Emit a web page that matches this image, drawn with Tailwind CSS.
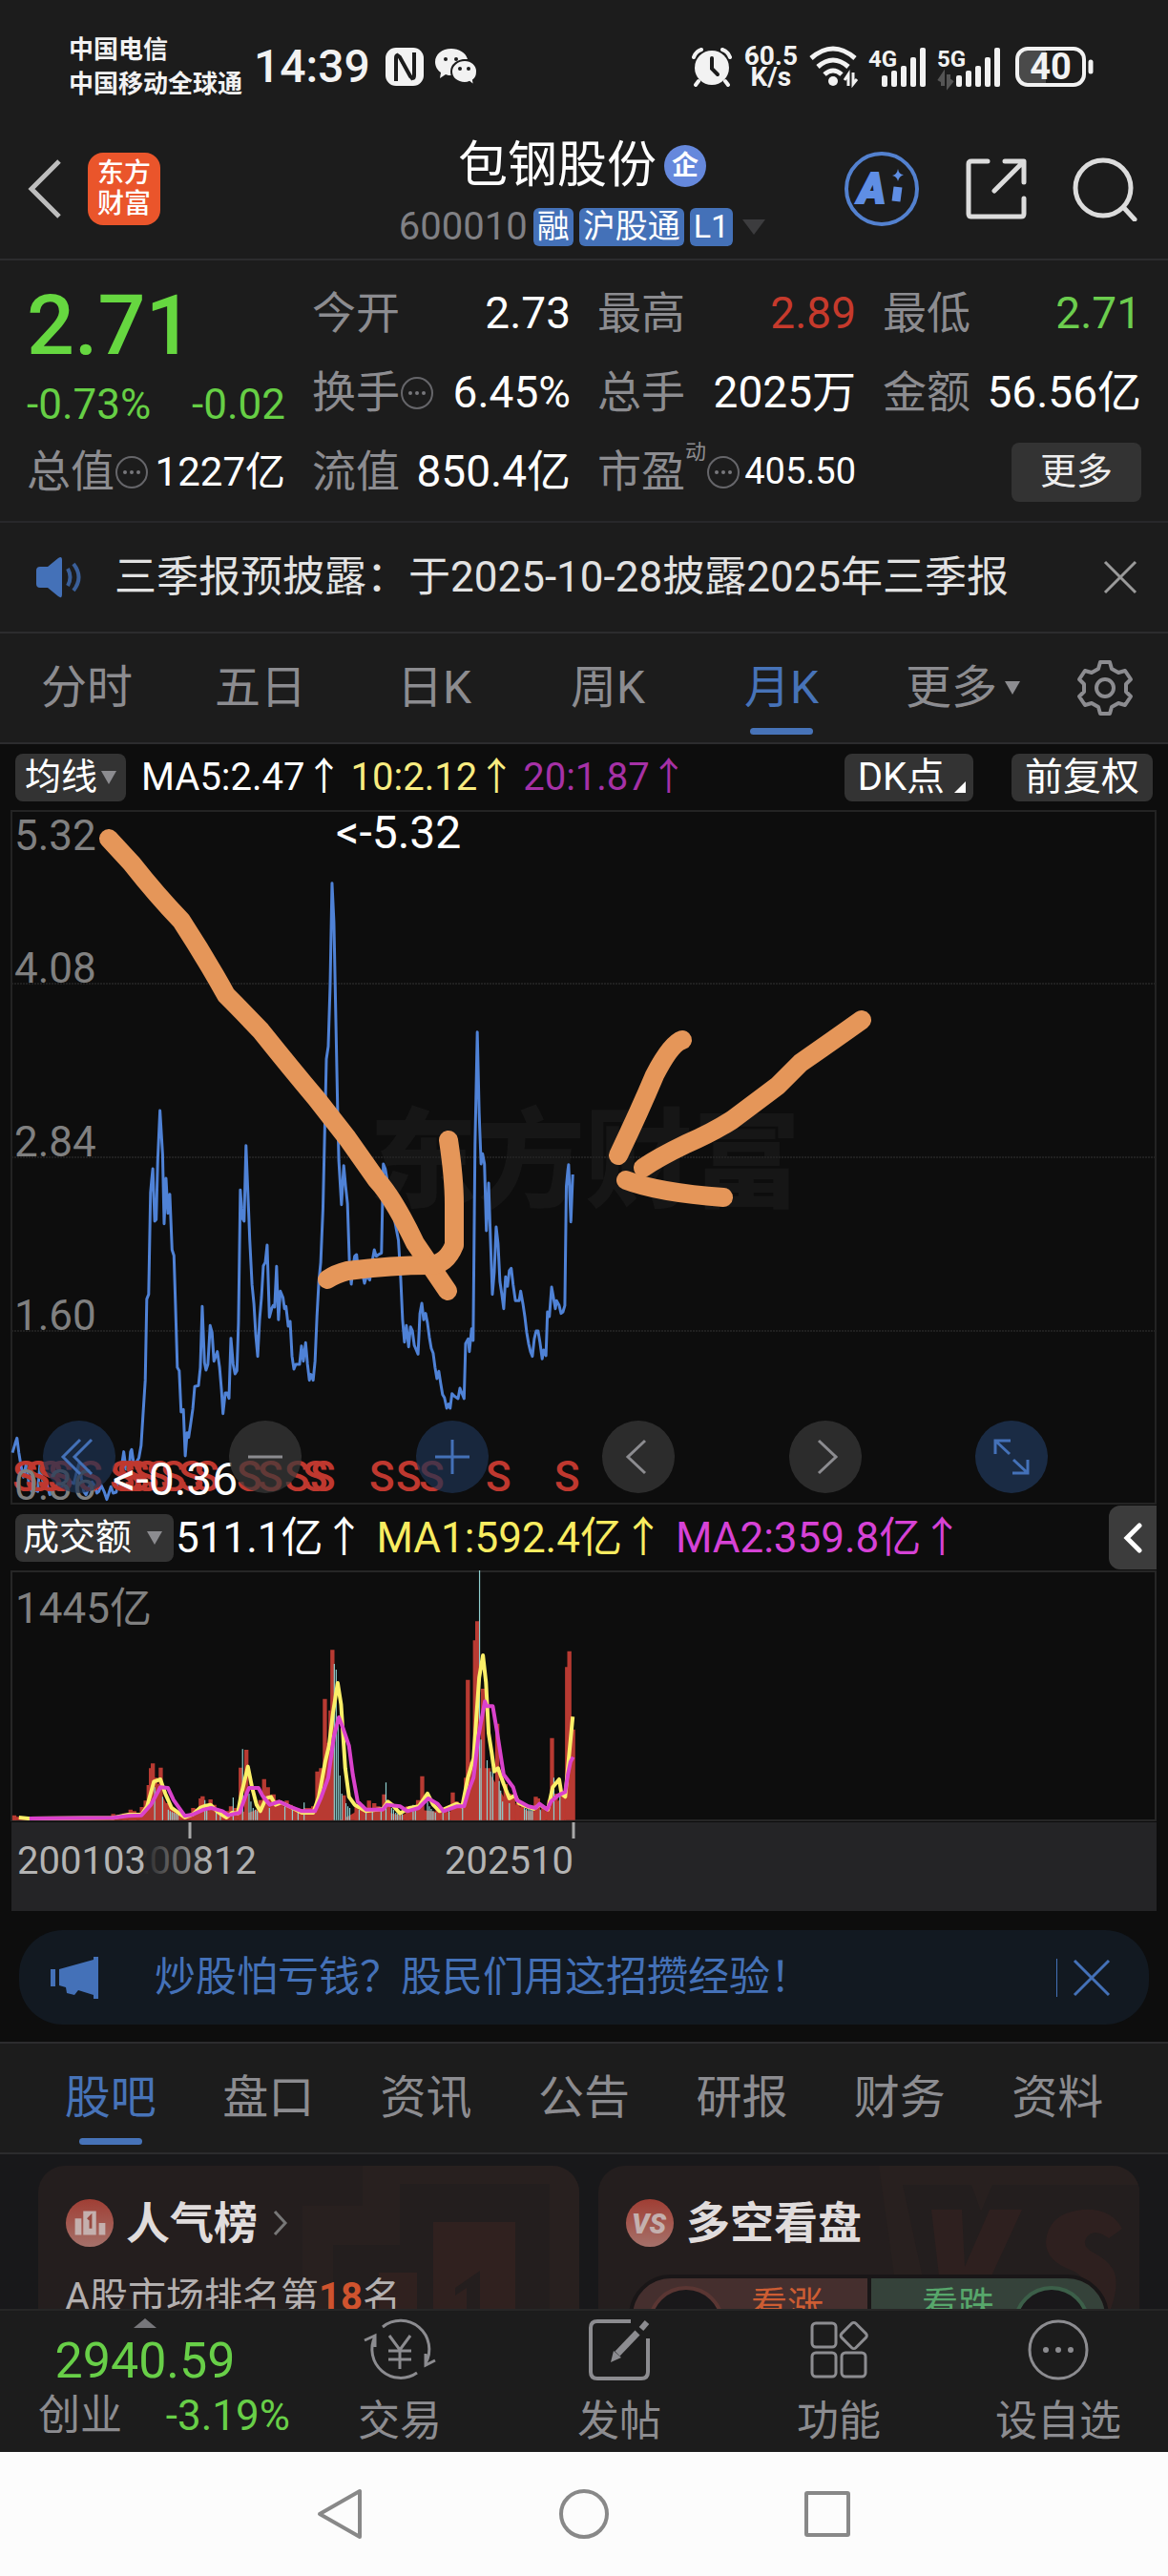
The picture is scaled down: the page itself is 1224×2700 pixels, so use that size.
<!DOCTYPE html>
<html lang="zh-CN">
	<head>
		<meta charset="UTF-8" />
		<meta name="viewport" content="width=device-width, initial-scale=1.0" />
		<title>包钢股份 600010</title>
		<script src="https://cdn.jsdelivr.net/npm/@tailwindcss/browser@4"></script>
		<style>
			body {
				font-family: Roboto, "Noto Sans CJK SC", sans-serif;
			}
		</style>
	</head>
	<body class="bg-[#0d0d0d] text-white">
		<!-- Status bar -->
		<div class="flex h-31 items-center bg-[#1c1c1c] pt-4 pr-19 pl-18 font-medium text-[#f2f2f2]">
			<div class="text-[26px] leading-9 font-bold">
				<div>中国电信</div>
				<div>中国移动全球通</div>
			</div>
			<div class="ml-3 text-5xl">14:39</div>
			<svg class="ml-3.5 h-11 w-11" viewBox="0 0 44 44" fill="none">
				<rect x="2" y="2" width="40" height="40" rx="11" fill="#f2f2f2" />
				<path d="M13 37V13q0-5 4-1l11 20q4 4 4-1V7" stroke="#1c1c1c" stroke-width="4" />
				<path d="M14 8l16 28" stroke="#1c1c1c" stroke-width="2" />
			</svg>
			<svg class="ml-2 h-11 w-12" viewBox="0 0 48 44" fill="#f2f2f2">
				<path d="M19 3C9 3 2 9 2 17c0 5 3 9 6 11l-1 6 6-4c2 1 4 1 7 1-2-10 5-17 16-17C34 7 27 3 19 3z" />
				<path d="M46 27c0-7-6-12-13-12s-14 5-14 12 6 12 14 12c2 0 3 0 5-1l5 4-1-6c3-2 4-5 4-9z" stroke="#1c1c1c" stroke-width="2" />
				<g fill="#1c1c1c">
					<circle cx="13" cy="14" r="2" /><circle cx="24" cy="14" r="2" />
					<circle cx="28" cy="24" r="2" /><circle cx="37" cy="24" r="2" />
				</g>
			</svg>
			<svg class="ml-auto h-11 w-11" viewBox="0 0 44 44" fill="none" stroke="#f2f2f2" stroke-width="4" stroke-linecap="round">
				<circle cx="22" cy="23" r="18" fill="#f2f2f2" stroke="none" />
				<path d="M3 12q2-6 8-8M41 12q-2-6-8-8M8 37l-3 4M36 37l3 4" />
				<path d="M22 13v11l6 6" stroke="#1c1c1c" />
			</svg>
			<div class="ml-3 text-center text-[28px] leading-[22px] font-bold">
				<div>60.5</div>
				<div>K/s</div>
			</div>
			<svg class="ml-3 h-11 w-13" viewBox="0 0 52 44" fill="none" stroke="#f2f2f2" stroke-width="5">
				<path d="M2 13Q25-7 48 13M9 22Q25 8 41 22M16 30Q25 22 34 30" />
				<circle cx="25" cy="37" r="5" fill="#f2f2f2" stroke="none" />
				<path d="M41 42V30l-4 6M46 28v12l4-5" stroke-width="3" />
			</svg>
			<svg class="ml-2 h-11 w-17 overflow-visible" viewBox="0 0 68 44" fill="#f2f2f2">
				<text x="2" y="22" font-size="24" font-weight="700">4G</text>
				<g><rect x="16" y="31" width="6" height="12" rx="2" /><rect x="26" y="26" width="6" height="17" rx="2" /><rect x="36" y="21" width="6" height="22" rx="2" /><rect x="46" y="12" width="6" height="31" rx="2" /><rect x="56" y="2" width="6" height="41" rx="2" /></g>
			</svg>
			<svg class="ml-1 h-11 w-18 overflow-visible" viewBox="0 0 72 44" fill="#f2f2f2">
				<text x="2" y="22" font-size="24" font-weight="700">5G</text>
				<g><rect x="22" y="31" width="6" height="12" rx="2" /><rect x="32" y="26" width="6" height="17" rx="2" /><rect x="42" y="21" width="6" height="22" rx="2" /><rect x="52" y="12" width="6" height="31" rx="2" /><rect x="62" y="2" width="6" height="41" rx="2" /></g>
				<path d="M8 42V31l-4 6M14 30v11l4-5" fill="none" stroke="#555" stroke-width="4" />
			</svg>
			<svg class="ml-3 h-11 w-21" viewBox="0 0 84 44" fill="none">
				<path d="M14 3h18v38H14Q3 41 3 30V14Q3 3 14 3z" fill="#4a4a4a" />
				<rect x="2" y="3" width="70" height="38" rx="11" stroke="#f2f2f2" stroke-width="4" />
				<path d="M79 17v10" stroke="#f2f2f2" stroke-width="5" stroke-linecap="round" />
				<text x="37" y="35" fill="#f2f2f2" font-size="38" font-weight="700" text-anchor="middle">40</text>
			</svg>
		</div>

		<!-- Title bar -->
		<header class="grid h-[149px] grid-cols-[1fr_auto_1fr] items-center border-b-2 border-[#2c2c2e] bg-[#1c1c1c] pr-8 pl-7">
			<div class="flex items-center gap-7">
				<button aria-label="返回">
					<svg class="h-16 w-9" viewBox="0 0 36 64" fill="none" stroke="#bdbdbd" stroke-width="5"><path d="M34 3L5 32l29 29" /></svg>
				</button>
				<a href="#" class="flex h-19 w-19 items-center justify-center rounded-2xl bg-[#ea552b] text-center text-[28px] leading-8 font-medium text-white">东方<br />财富</a>
			</div>
			<div class="pt-4">
				<h1 class="flex h-16 items-center justify-center gap-2 text-[52px]">
					包钢股份
					<span class="flex h-11 w-11 items-center justify-center rounded-full bg-[#6588dc] text-[28px] font-bold">企</span>
				</h1>
				<div class="flex h-16 items-center justify-center gap-1.5 text-[34px]">
					<span class="text-[40px] text-[#808084]">600010</span>
					<span class="flex h-10 items-center rounded-md bg-[#4471b8] px-1">融</span>
					<span class="flex h-10 items-center rounded-md bg-[#4471b8] px-1">沪股通</span>
					<span class="flex h-10 items-center rounded-md bg-[#4471b8] px-1">L1</span>
					<svg class="ml-1 h-4 w-6" viewBox="0 0 24 16" fill="#3c3c3e"><path d="M0 0h24L12 16z" /></svg>
				</div>
			</div>
			<div class="flex items-center justify-end gap-12">
				<button aria-label="AI">
					<svg class="h-20 w-20" viewBox="0 0 80 80" fill="none">
						<circle cx="40" cy="40" r="37" stroke="#5381cf" stroke-width="4" />
						<text x="15" y="55" fill="#5f8ee4" stroke="#5f8ee4" stroke-width="2" font-size="44" font-weight="900" font-style="italic">A</text>
						<path d="M57 38l-2 15" stroke="#5f8ee4" stroke-width="9" stroke-linejoin="round" />
						<path d="M57 19q1 6 6 6-5 2-6 7-1-5-6-6 5-1 6-7z" fill="#5f8ee4" />
					</svg>
				</button>
				<button aria-label="分享">
					<svg class="h-16 w-16" viewBox="0 0 64 64" fill="none" stroke="#dcdcdc" stroke-width="5" stroke-linecap="round" stroke-linejoin="round">
						<path d="M23 3H6Q3 3 3 6v52q0 3 3 3h52q3 0 3-3V42M41 3h20v22M60 4L30 34" />
					</svg>
				</button>
				<button aria-label="搜索">
					<svg class="h-17 w-17" viewBox="0 0 68 68" fill="none" stroke="#dcdcdc" stroke-width="5" stroke-linecap="round">
						<circle cx="32" cy="33" r="29" /><path d="M54 54l11 12" />
					</svg>
				</button>
			</div>
		</header>

		<!-- Quote -->
		<section class="grid grid-cols-4 grid-rows-3 gap-x-7 border-b-2 border-[#28282a] bg-[#1c1c1c] px-7 pt-3.5 pb-2.5 text-[46px] *:h-[83px]">
			<div class="flex items-center pt-6 text-[88px] font-medium text-[#66d740]">2.71</div>
			<div class="flex items-center justify-between"><span class="text-[#8c8c90]">今开</span><span>2.73</span></div>
			<div class="flex items-center justify-between"><span class="text-[#8c8c90]">最高</span><span class="text-[#c63a2c]">2.89</span></div>
			<div class="flex items-center justify-between"><span class="text-[#8c8c90]">最低</span><span class="text-[#6ccd4e]">2.71</span></div>

			<div class="flex items-center justify-between pt-6 text-[44px] text-[#66cf45]"><span>-0.73%</span><span>-0.02</span></div>
			<div class="flex items-center">
				<span class="text-[#8c8c90]">换手</span>
				<svg class="h-9 w-9" viewBox="0 0 36 36" fill="#77777b"><circle cx="18" cy="18" r="16" fill="none" stroke="#66666a" stroke-width="2" /><circle cx="11" cy="18" r="2" /><circle cx="18" cy="18" r="2" /><circle cx="25" cy="18" r="2" /></svg>
				<span class="ml-auto">6.45%</span>
			</div>
			<div class="flex items-center justify-between"><span class="text-[#8c8c90]">总手</span><span>2025万</span></div>
			<div class="flex items-center justify-between whitespace-nowrap"><span class="text-[#8c8c90]">金额</span><span>56.56亿</span></div>

			<div class="flex items-center">
				<span class="text-[#8c8c90]">总值</span>
				<svg class="h-9 w-9" viewBox="0 0 36 36" fill="#77777b"><circle cx="18" cy="18" r="16" fill="none" stroke="#66666a" stroke-width="2" /><circle cx="11" cy="18" r="2" /><circle cx="18" cy="18" r="2" /><circle cx="25" cy="18" r="2" /></svg>
				<span class="ml-auto text-[42px]">1227亿</span>
			</div>
			<div class="flex items-center justify-between"><span class="text-[#8c8c90]">流值</span><span>850.4亿</span></div>
			<div class="flex items-center">
				<span class="text-[#8c8c90]">市盈</span>
				<span class="self-start pt-1 text-[22px] text-[#8c8c90]">动</span>
				<svg class="h-9 w-9" viewBox="0 0 36 36" fill="#77777b"><circle cx="18" cy="18" r="16" fill="none" stroke="#66666a" stroke-width="2" /><circle cx="11" cy="18" r="2" /><circle cx="18" cy="18" r="2" /><circle cx="25" cy="18" r="2" /></svg>
				<span class="ml-auto text-[38px]">405.50</span>
			</div>
			<div class="flex items-center justify-end"><button class="h-[62px] rounded-lg bg-[#333] px-[30px] text-[38px] text-[#ededed]">更多</button></div>
		</section>

		<!-- Notice -->
		<div class="flex h-[116px] items-center border-b-2 border-[#2c2c2e] bg-[#1c1c1c] pr-8 pl-9">
			<svg class="h-11 w-13" viewBox="0 0 52 44" fill="#4471b8">
				<path d="M6 11h8L25 2q4-3 4 2v36q0 5-4 2L14 33H6q-4 0-4-4V15q0-4 4-4z" />
				<path d="M35 13q5 9 0 18M41 8q11 14 0 28" fill="none" stroke="#3a5f99" stroke-width="4" />
			</svg>
			<p class="ml-8 text-[44px] whitespace-nowrap text-[#e2e2e2]">三季报预披露：于2025-10-28披露2025年三季报</p>
			<button class="ml-auto" aria-label="关闭">
				<svg class="h-9 w-9" viewBox="0 0 36 36" stroke="#9a9a9a" stroke-width="3"><path d="M2 2l32 32M34 2L2 34" /></svg>
			</button>
		</div>

		<!-- Period tabs -->
		<div class="flex h-[116px] items-center border-b-2 border-[#2c2c2e] bg-[#1c1c1c] text-5xl text-[#8c8c90]">
			<nav class="grid h-full flex-1 grid-cols-6 *:flex *:h-full *:items-center *:justify-center">
				<a href="#">分时</a>
				<a href="#">五日</a>
				<a href="#">日K</a>
				<a href="#">周K</a>
				<a href="#" class="relative text-[#4773b8]">月K<span class="absolute bottom-2 h-[7px] w-[66px] rounded-sm bg-[#4773b8]"></span></a>
				<a href="#" class="pl-4">更多<svg class="ml-2 h-4 w-4" viewBox="0 0 16 16" fill="#8c8c90"><path d="M0 1h16L8 15z" /></svg></a>
			</nav>
			<button class="flex w-[132px] justify-center" aria-label="设置">
				<svg class="h-15 w-15" viewBox="0 0 60 60" fill="none" stroke="#8c8c90" stroke-width="4" stroke-linejoin="round">
					<path d="M25 3h10l2 7 7 4 7-2 6 9-5 5v8l5 5-6 9-7-2-7 4-2 7H25l-2-7-7-4-7 2-6-9 5-5v-8l-5-5 6-9 7 2 7-4z" />
					<circle cx="30" cy="30" r="9" />
				</svg>
			</button>
		</div>

		<!-- Moving averages -->
		<div class="flex h-[69px] items-center gap-2 px-4 text-[40px] whitespace-nowrap">
			<button class="mr-2 flex h-[50px] items-center gap-1 rounded-lg bg-[#333] px-2.5 text-[38px]">
				均线<svg class="h-4 w-4" viewBox="0 0 16 16" fill="#8c8c90"><path d="M0 1h16L8 15z" /></svg>
			</button>
			<span>MA5:2.47↑</span>
			<span class="text-[#f8ec80]">10:2.12↑</span>
			<span class="text-[#a631a6]">20:1.87↑</span>
			<button class="mr-8 ml-auto flex h-[50px] items-center gap-2.5 rounded-lg bg-[#333] pr-2 pl-3.5">
				DK点<svg class="mt-5 h-3 w-3" viewBox="0 0 12 12" fill="#fff"><path d="M12 0v12H0z" /></svg>
			</button>
			<button class="flex h-[50px] items-center rounded-lg bg-[#333] px-3.5">前复权</button>
		</div>

		<!-- Monthly price chart -->
		<div class="relative">
			<svg class="block h-auto w-full" viewBox="0 849 1224 728" fill="none">
				<text x="387" y="1256" fill="#161616" font-size="113" font-weight="900">东方财富</text>
				<rect x="12" y="850" width="1199" height="726" stroke="#232323" stroke-width="2" />
				<path d="M12 1031h1199M12 1213h1199M12 1395h1199" stroke="#202020" stroke-width="2" stroke-dasharray="2 1" />
				<g transform="translate(0 1200) scale(.3954 .3333)">
					<polyline stroke="#4f82d6" stroke-width="3" vector-effect="non-scaling-stroke" stroke-linejoin="round" points="33,968 40,940 45,922 50,968 55,1005 62,1045 70,1000 76,1060 84,1090 92,1085 100,1090 106,1005 112,1050 118,1075 125,1070 132,1100 140,1085 150,1070 160,1080 170,1072 180,1075 188,1060 196,1065 205,1020 210,1000 216,1050 222,1090 228,1100 236,1075 244,1060 250,1070 257,1095 262,1090 268,1070 276,1090 283,1115 290,1090 294,1075 300,1095 308,1092 314,1060 320,1030 328,965 334,1020 342,1020 346,965 349,958 354,1000 360,1000 368,985 374,945 379,850 385,740 389,485 394,470 399,150 402,110 405,75 410,240 414,235 418,50 424,-108 431,30 435,248 440,105 445,215 450,155 456,330 461,348 465,500 470,700 475,710 480,840 486,832 491,978 496,905 500,920 505,880 511,830 516,760 526,757 531,700 536,508 542,685 546,708 551,690 557,568 562,590 567,680 576,650 582,700 587,770 591,845 597,780 602,780 607,797 612,608 618,690 623,720 628,710 632,560 637,142 642,230 647,240 652,2 657,150 662,300 668,440 673,500 678,600 683,665 688,550 693,480 698,380 703,370 708,315 714,542 720,515 724,505 728,510 733,382 738,550 743,460 750,480 754,515 758,508 764,570 769,555 774,665 779,705 784,690 794,690 799,632 804,680 810,622 815,690 820,740 824,722 830,740 835,680 840,540 845,430 850,370 856,200 860,-10 865,-270 870,-310 875,-500 880,-823 885,-700 890,-400 895,-100 898,50 905,188 911,65 916,130 921,185 926,365 931,438 936,380 940,350 945,345 950,400 960,400 966,435 972,410 980,425 986,370 992,330 997,350 1003,345 1011,340 1016,60 1021,75 1027,115 1040,200 1056,300 1062,420 1067,550 1072,620 1077,568 1083,635 1088,572 1093,585 1098,630 1108,658 1113,530 1118,498 1123,550 1128,530 1133,560 1138,605 1143,640 1148,655 1153,700 1158,735 1163,712 1168,750 1173,785 1178,795 1184,828 1189,815 1193,828 1198,782 1204,790 1214,798 1219,765 1224,780 1230,798 1234,625 1241,610 1244,650 1250,578 1254,615 1259,0 1265,-355 1270,-100 1275,60 1279,28 1284,60 1289,270 1295,120 1300,300 1305,470 1310,400 1315,258 1320,310 1325,430 1330,470 1335,515 1340,415 1345,445 1350,395 1355,388 1360,440 1366,490 1376,490 1380,460 1386,500 1391,540 1396,590 1401,625 1406,650 1411,665 1416,610 1421,585 1426,585 1431,620 1437,673 1441,645 1447,663 1451,525 1456,540 1462,447 1472,515 1475,490 1482,505 1487,530 1492,525 1497,505 1501,130 1505,80 1507,62 1513,242 1518,93" />
				</g>
				<!-- Sell markers -->
				<text y="1563" fill="#bf382f" font-size="44" font-weight="500" x="13 26 39 50 81 115 122 130 140 153 168 187 203 248 270 298 317 325 387 415 439 509 581">SSSSSSSSSSSSSSSSSSSSSSS</text>
				<g fill="#808080" font-size="44">
					<text x="15" y="891">5.32</text>
					<text x="15" y="1030">4.08</text>
					<text x="15" y="1212">2.84</text>
					<text x="15" y="1394">1.60</text>
					<text x="15" y="1572">0.36</text>
				</g>
				<g fill="#fff" font-size="48">
					<text x="352" y="889">&lt;-5.32</text>
					<text x="118" y="1567">&lt;-0.36</text>
				</g>
				<!-- Hand drawn arrows -->
				<g stroke="#e59659" stroke-width="20" stroke-linecap="round" stroke-linejoin="round">
					<path d="M114 879L138 905Q164 938 190 965Q216 1005 237 1043Q252 1058 273 1080Q305 1120 332 1152L364 1193L395 1237Q412 1255 435 1303L469 1353" />
					<path d="M470 1195Q476 1235 476 1262V1305Q468 1325 451 1326Q411 1326 364 1332Q352 1335 343 1341" />
					<path d="M715 1090Q703 1094 686 1127Q670 1165 648 1211" />
					<path d="M903 1069Q875 1089 839 1114L815 1138L767 1174Q745 1188 719 1199Q690 1213 674 1224" />
					<path d="M656 1237Q690 1250 758 1255" />
				</g>
			</svg>
			<div class="absolute inset-x-0 bottom-3 flex justify-between pr-[126px] pl-[45px] *:flex *:h-[76px] *:w-[76px] *:items-center *:justify-center *:rounded-full">
				<button class="bg-[#1e3352]/70" aria-label="最早">
					<svg class="h-10 w-10" viewBox="0 0 40 40" fill="none" stroke="#4471b8" stroke-width="3"><path d="M21 2L3 20l18 18M33 2L15 20l18 18" /></svg>
				</button>
				<button class="bg-[#3a3a3a]/70" aria-label="缩小">
					<svg class="h-10 w-10" viewBox="0 0 40 40" stroke="#8c8c90" stroke-width="3"><path d="M2 20h36" /></svg>
				</button>
				<button class="bg-[#1e3352]/70" aria-label="放大">
					<svg class="h-10 w-10" viewBox="0 0 40 40" stroke="#4471b8" stroke-width="3"><path d="M2 20h36M20 2v36" /></svg>
				</button>
				<button class="bg-[#3a3a3a]/70" aria-label="左移">
					<svg class="h-10 w-10" viewBox="0 0 40 40" fill="none" stroke="#8c8c90" stroke-width="3"><path d="M27 3L9 20l18 17" /></svg>
				</button>
				<button class="bg-[#3a3a3a]/70" aria-label="右移">
					<svg class="h-10 w-10" viewBox="0 0 40 40" fill="none" stroke="#8c8c90" stroke-width="3"><path d="M13 3l18 17-18 17" /></svg>
				</button>
				<button class="bg-[#1e3352]/80" aria-label="全屏">
					<svg class="h-10 w-10" viewBox="0 0 40 40" fill="none" stroke="#4471b8" stroke-width="3"><path d="M3 17V3h16M3 3l15 14M37 23v14H21M37 37L22 23" /></svg>
				</button>
			</div>
		</div>

		<!-- Turnover -->
		<div class="flex h-[69px] items-center gap-3 pr-3 pl-4 text-[44px] whitespace-nowrap">
			<div class="flex items-center gap-0.5">
				<button class="flex h-[50px] items-center gap-4 rounded-lg bg-[#333] pr-3 pl-2 text-[38px]">
					成交额<svg class="h-4 w-4" viewBox="0 0 16 16" fill="#8c8c90"><path d="M0 1h16L8 15z" /></svg>
				</button>
				<span>511.1亿↑</span>
			</div>
			<span class="text-[#f8ec60]">MA1:592.4亿↑</span>
			<span class="text-[#d642d6]">MA2:359.8亿↑</span>
			<button class="ml-auto flex h-[67px] w-[50px] items-center justify-center rounded-l-xl bg-[#3c3c3c]" aria-label="展开">
				<svg class="h-8 w-5" viewBox="0 0 20 32" fill="none" stroke="#fff" stroke-width="5" stroke-linecap="round"><path d="M17 3L4 16l13 13" /></svg>
			</button>
		</div>
		<svg class="block h-auto w-full" viewBox="0 1646 1224 358" fill="none">
			<rect x="12" y="1647" width="1199" height="261" stroke="#262626" stroke-width="2" />
			<rect x="12" y="1910" width="1200" height="93" fill="#242426" />
			<text x="16" y="1701" fill="#808080" font-size="44">1445亿</text>
			<g transform="translate(0 1570) scale(.3954 .3333)">
				<path fill="#bf382f" d="M33 1013V1003L300 1002L340 996L380 990L400 950L425 925L440 960L490 1005L540 980L600 1002L640 985L660 990L700 970L760 970L830 985L860 900L880 800V1013zM900 1013L925 1000L960 975L1015 985L1060 998L1110 980L1180 990L1230 975L1262 850L1290 850L1340 950L1400 985L1450 985L1500 930V1013z" />
				<path stroke="#b83a32" stroke-width="11" d="M38 1013V998M300 1013V994M330 1013V992M346 1013V980M356 1013V985M376 1013V972M386 1013V952M394 1013V903M400 1013V850M405 1013V835M412 1013V880M419 1013V900M426 1013V848M441 1013V960M512 1013V975M522 1013V978M532 1013V945M537 1013V938M558 1013V948M568 1013V965M578 1013V985M602 1013V985M612 1013V970M623 1013V975M638 1013V848M653 1013V792M690 1013V950M700 1013V884M710 1013V910M716 1013V935M725 1013V932M735 1013V950M745 1013V955M760 1013V952M770 1013V965M780 1013V975M800 1013V978M810 1013V975M820 1013V975M830 1013V970M841 1013V860M851 1013V850M861 1013V632M870 1013V770M876 1013V668M881 1013V478M911 1013V935M945 1013V965M960 1013V965M978 1013V952M992 1013V960M1003 1013V970M1018 1013V932M1030 1013V960M1080 1013V970M1108 1013V950M1119 1013V875M1160 1013V975M1180 1013V975M1200 1013V926M1210 1013V955M1220 1013V965M1235 1013V880M1240 1013V572M1250 1013V830M1259 1013V448M1265 1013V388M1280 1013V600M1295 1013V850M1310 1013V900M1318 1013V710M1340 1013V900M1350 1013V930M1360 1013V940M1372 1013V960M1385 1013V965M1420 1013V940M1426 1013V945M1440 1013V970M1456 1013V950M1463 1013V755M1473 1013V930M1490 1013V930M1503 1013V532M1509 1013V482M1519 1013V728" />
				<path stroke="#8fd0d0" stroke-width="3" d="M410 1013V910M431 1013V940M446 1013V980M451 1013V985M456 1013V988M461 1013V990M466 1013V992M471 1013V996M543 1013V950M548 1013V965M573 1013V985M584 1013V990M618 1013V942M643 1013V790M660 1013V930M665 1013V955M671 1013V975M677 1013V980M682 1013V985M714 1013V975M755 1013V970M775 1013V980M790 1013V985M806 1013V958M886 1013V522M891 1013V540M896 1013V690M901 1013V873M906 1013V930M917 1013V960M922 1013V970M927 1013V975M952 1013V980M970 1013V980M987 1013V980M1010 1013V980M1023 1013V895M1038 1013V975M1043 1013V980M1049 1013V990M1054 1013V992M1060 1013V994M1066 1013V994M1095 1013V965M1101 1013V975M1133 1013V955M1138 1013V970M1143 1013V978M1148 1013V985M1154 1013V990M1174 1013V990M1190 1013V980M1226 1013V975M1271 1013V228M1275 1013V760M1291 1013V825M1300 1013V860M1306 1013V850M1323 1013V890M1327 1013V920M1332 1013V955M1350 1013V960M1390 1013V975M1395 1013V978M1401 1013V978M1406 1013V980M1411 1013V980M1432 1013V980M1468 1013V880M1484 1013V920" />
				<polyline stroke="#fbef68" stroke-width="4" vector-effect="non-scaling-stroke" stroke-linejoin="round" points="50,1005 75,1008 300,1006 340,996 375,996 390,970 408,892 425,885 438,930 455,975 490,1005 510,996 530,975 545,968 558,965 575,985 590,998 600,1005 615,990 630,992 640,930 657,845 668,910 680,965 690,985 705,945 718,940 730,965 745,958 770,972 800,990 830,990 845,940 862,830 872,780 882,680 895,582 904,650 915,850 925,940 940,965 970,985 1015,978 1028,955 1042,968 1060,992 1085,975 1110,970 1133,930 1148,965 1165,985 1190,972 1210,962 1225,970 1240,880 1255,820 1262,700 1270,565 1280,495 1288,580 1295,740 1303,800 1310,860 1320,850 1335,900 1350,945 1365,935 1375,960 1395,970 1415,978 1430,965 1452,980 1465,910 1482,885 1488,930 1498,940 1505,850 1518,688" />
				<polyline stroke="#da42cc" stroke-width="4" vector-effect="non-scaling-stroke" stroke-linejoin="round" points="78,1008 300,1006 340,1000 375,998 400,965 425,910 445,912 460,950 490,1000 510,996 540,980 560,975 590,985 605,998 635,990 650,940 660,912 685,912 695,935 715,965 740,955 770,972 800,985 835,985 850,945 870,880 885,750 898,690 908,720 925,780 935,870 948,955 970,980 1015,980 1025,965 1060,970 1080,985 1110,975 1135,945 1160,962 1175,985 1210,970 1230,970 1242,920 1255,880 1268,750 1285,640 1290,655 1306,655 1318,740 1335,870 1360,910 1370,950 1400,970 1420,975 1430,962 1450,980 1460,955 1480,935 1498,925 1505,870 1512,830 1519,815" />
			</g>
			<path d="M199 1910v17M601 1910v17" stroke="#a8a8a8" stroke-width="3" />
			<linearGradient id="fade" gradientUnits="userSpaceOnUse" x1="150" x2="215" y1="0" y2="0">
				<stop offset="0" stop-color="#b0b0b0" stop-opacity="0" />
				<stop offset="1" stop-color="#b0b0b0" />
			</linearGradient>
			<g fill="#b4b4b4" font-size="40">
				<text x="134" y="1964" fill="url(#fade)">200812</text>
				<text x="18" y="1964">200103</text>
				<text x="601" y="1964" text-anchor="end">202510</text>
			</g>
		</svg>

		<!-- Promo banner -->
		<div class="mx-5 mt-[19px] mb-[18px] flex h-[99px] items-center rounded-[46px] bg-[#121921] pr-10 pl-8 text-[#4471b8]">
			<svg class="h-11 w-13" viewBox="0 0 52 44" fill="#4471b8"><path d="M1 13h5v18H1zM10 13L46 3V0h5v44h-5v-4l-16-5-4 5-8-2-1-6-7-2z" /></svg>
			<a href="#" class="ml-[58px] text-[43px] whitespace-nowrap">炒股怕亏钱？股民们用这招攒经验！</a>
			<span class="ml-auto h-10 w-px bg-[#4471b8]"></span>
			<button class="ml-4" aria-label="关闭">
				<svg class="h-10 w-10" viewBox="0 0 40 40" stroke="#4471b8" stroke-width="3"><path d="M2 2l36 36M38 2L2 38" /></svg>
			</button>
		</div>

		<!-- Content tabs -->
		<nav class="grid h-[118px] grid-cols-7 border-y-2 border-[#2c2c2e] bg-[#1c1c1c] px-[33px] text-5xl text-[#8c8c90] *:flex *:items-center *:justify-center">
			<a href="#" class="relative text-[#4773b8]">股吧<span class="absolute bottom-2 h-[7px] w-[66px] rounded-sm bg-[#4773b8]"></span></a>
			<a href="#">盘口</a>
			<a href="#">资讯</a>
			<a href="#">公告</a>
			<a href="#">研报</a>
			<a href="#">财务</a>
			<a href="#">资料</a>
		</nav>

		<!-- Cards -->
		<div class="grid h-[162px] grid-cols-2 gap-5 overflow-hidden bg-[#18181a] pt-3 pr-[30px] pl-10">
			<section class="relative h-[260px] overflow-hidden rounded-[28px] bg-[#241e1e] px-7 pt-[30px]">
				<svg class="absolute top-0 right-0 h-[150px] w-[290px]" viewBox="0 0 290 150">
					<path d="M0 150V42h63V0h227v150z" fill="#28201f" />
					<path d="M32 150V83h70V19h157v131z" fill="#231e1e" />
					<path d="M137 150V59h86v91zM80 150v-38h40v38z" fill="#30211f" />
					<path d="M160 128l26-18v40h-14v-22l-12 8z" fill="#241e1e" />
				</svg>
				<h2 class="relative flex h-15 items-center text-[46px] font-bold text-[#e0dcdc]">
					<svg class="mr-3 h-[52px] w-[52px]" viewBox="0 0 54 54">
						<defs><linearGradient id="badge" x2="0" y2="1"><stop stop-color="#a03e34" /><stop offset="1" stop-color="#a5716a" /></linearGradient></defs>
						<circle cx="27" cy="27" r="26" fill="url(#badge)" />
						<path d="M11 22h7v18h-7zM20 14h14v26H20zM37 27h7v13h-7z" fill="#c4b0ae" />
						<path d="M25 23l3-3v13" fill="none" stroke="#98493f" stroke-width="3" />
					</svg>
					人气榜
					<svg class="ml-4 h-7 w-4" viewBox="0 0 16 28" fill="none" stroke="#777" stroke-width="3"><path d="M2 2l11 12L2 26" /></svg>
				</h2>
				<p class="relative pt-4.5 text-[40px] text-[#b4b0b0]">A股市场排名第<b class="text-[#cf532e]">18</b>名</p>
			</section>
			<section class="relative h-[260px] overflow-hidden rounded-[28px] bg-[#241e1e] px-7 pt-[30px]">
				<svg class="absolute top-0 right-0 h-[150px] w-[290px]" viewBox="0 0 290 150">
					<path d="M17 0h273v150H38z" fill="#28201f" />
					<path d="M42 20h72l10 28 12-28h154v130H70z" fill="#231e1e" />
					<path d="M72 46h32l3 60 26-60h34l-48 104H84z" fill="#2e201f" />
					<path d="M272 66q-12-22-42-20-36 4-38 34 0 20 28 30 14 6 10 18-6 14-34 12l-6 10h70q10-28 2-42-6-10-22-18-10-6-6-14 8-12 24 0z" fill="#2e201f" />
				</svg>
				<h2 class="relative flex h-15 items-center text-[46px] font-bold text-[#e0dcdc]">
					<svg class="mr-3 h-[52px] w-[52px]" viewBox="0 0 54 54">
						<circle cx="27" cy="27" r="26" fill="url(#badge)" />
						<text x="26" y="38" fill="#c4b0ae" font-size="30" font-weight="900" font-style="italic" text-anchor="middle">VS</text>
					</svg>
					多空看盘
				</h2>
				<div class="relative mx-1 mt-6 flex h-22 overflow-hidden rounded-full border-4 border-[#191617] text-[38px]">
					<button class="flex flex-1 items-start gap-7 bg-[#452f2e] pl-4 text-[#cd5d33]"><span class="mt-2 h-20 w-20 rounded-full border-4 border-[#5a3633] bg-[#19181a]"></span><span>看涨</span></button>
					<span class="w-1 bg-[#191617]"></span>
					<button class="flex flex-1 items-start justify-end gap-5 bg-[#35423a] pr-4 text-[#57a76b]"><span>看跌</span><span class="mt-2 h-20 w-20 rounded-full border-4 border-[#3c5f49] bg-[#19181a]"></span></button>
				</div>
			</section>
		</div>

		<!-- Bottom bar -->
		<footer class="flex h-[150px] border-t-2 border-[#262626] bg-[#1c1c1c] text-[44px] text-[#8c8c90]">
			<div class="flex w-[304px] flex-col items-center pt-2">
				<svg class="h-2.5 w-6" viewBox="0 0 24 10" fill="#77777b"><path d="M12 0l12 10H0z" /></svg>
				<div class="text-[52px] leading-[70px] text-[#68cf48]">2940.59</div>
				<div class="flex w-full items-center justify-between pl-10 leading-11"><span>创业</span><span class="text-[44px] text-[#68cf48]">-3.19%</span></div>
			</div>
			<nav class="grid flex-1 grid-cols-4 *:flex *:flex-col *:items-center *:gap-2.5 *:pt-2 *:leading-[60px]">
				<a href="#">
					<svg class="h-17 w-20" viewBox="0 0 80 68" fill="none" stroke="#8c8c90" stroke-width="3">
						<path d="M22 9A30 30 0 0 1 67 47M58 57A30 30 0 0 1 14 19M3 23l11-5v12M77 44l-10 5v-12" />
						<path d="M29 18l11 15 11-15M40 33v20M28 34h24M28 43h24" />
					</svg>交易
				</a>
				<a href="#">
					<svg class="h-17 w-17" viewBox="0 0 68 68" fill="none" stroke="#8c8c90" stroke-width="4">
						<path d="M46 3H11q-7 0-7 7v46q0 7 7 7h46q7 0 7-7V21" />
						<path d="M53 15L32 37" stroke-width="7" /><path d="M28 34l8 7-11 5z" fill="#8c8c90" stroke="none" /><path d="M57 11l6-7" stroke-width="6" />
					</svg>发帖
				</a>
				<a href="#">
					<svg class="h-17 w-17" viewBox="0 0 68 68" fill="none" stroke="#8c8c90" stroke-width="3">
						<rect x="6" y="5" width="25" height="25" rx="4" /><rect x="6" y="36" width="25" height="25" rx="4" /><rect x="37" y="36" width="25" height="25" rx="4" />
						<rect x="39" y="7" width="21" height="21" rx="3" transform="rotate(45 49 18)" />
					</svg>功能
				</a>
				<a href="#">
					<svg class="h-17 w-17" viewBox="0 0 68 68" fill="#8c8c90">
						<circle cx="34" cy="33" r="30" fill="none" stroke="#8c8c90" stroke-width="3" />
						<circle cx="21" cy="33" r="3" /><circle cx="34" cy="33" r="3" /><circle cx="47" cy="33" r="3" />
					</svg>设自选
				</a>
			</nav>
		</footer>

		<!-- System navigation -->
		<div class="grid h-[130px] grid-cols-3 bg-[#fcfcfc] px-[229px] *:flex *:items-center *:justify-center">
			<button aria-label="后退"><svg class="h-14 w-14" viewBox="0 0 56 56" fill="none" stroke="#888" stroke-width="4" stroke-linejoin="round"><path d="M48 4v48L6 28z" /></svg></button>
			<button aria-label="主页"><svg class="h-14 w-14" viewBox="0 0 56 56" fill="none" stroke="#888" stroke-width="4"><circle cx="28" cy="28" r="24" /></svg></button>
			<button aria-label="最近任务"><svg class="h-14 w-14" viewBox="0 0 56 56" fill="none" stroke="#888" stroke-width="4"><rect x="6" y="6" width="44" height="44" rx="1" /></svg></button>
		</div>
	</body>
</html>
